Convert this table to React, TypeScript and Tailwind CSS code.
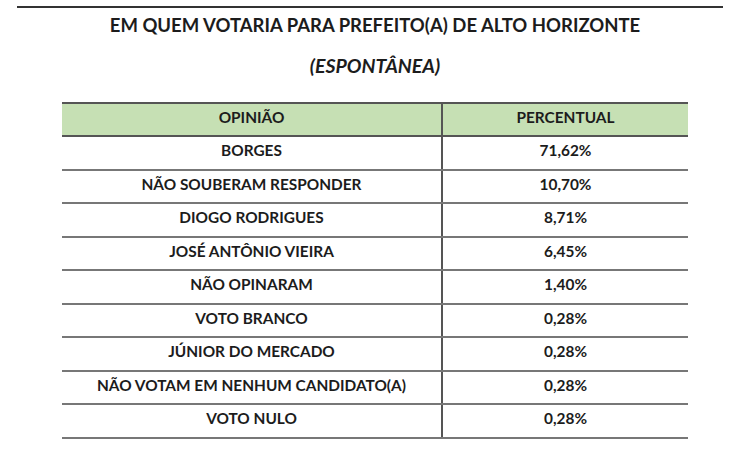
const rows: [string, string][] = [
  ["BORGES", "71,62%"],
  ["NÃO SOUBERAM RESPONDER", "10,70%"],
  ["DIOGO RODRIGUES", "8,71%"],
  ["JOSÉ ANTÔNIO VIEIRA", "6,45%"],
  ["NÃO OPINARAM", "1,40%"],
  ["VOTO BRANCO", "0,28%"],
  ["JÚNIOR DO MERCADO", "0,28%"],
  ["NÃO VOTAM EM NENHUM CANDIDATO(A)", "0,28%"],
  ["VOTO NULO", "0,28%"],
];

export default function App() {
  return (
    <div
      className="w-[750px] h-[450px] bg-white text-[#1c1c1c] overflow-hidden"
      style={{ fontFamily: "Lato, 'Open Sans', sans-serif" }}
    >
      {/* Top rule */}
      <div className="pt-[6px] pl-[17px]">
        <div className="w-[706px] h-[2px] bg-[#333]" />
      </div>

      {/* Heading */}
      <h1 className="mt-[6px] text-center font-bold text-[18.5px] leading-[22px]">
        EM QUEM VOTARIA PARA PREFEITO(A) DE ALTO HORIZONTE
      </h1>
      <h2 className="mt-[19px] text-center font-bold italic text-[19.5px] leading-[22px]">
        (ESPONTÂNEA)
      </h2>

      {/* Table */}
      <div className="mt-[25px] mx-auto w-[626px] border-t-2 border-[#555]">
        <div className="grid grid-cols-[381px_1fr] h-[33px] bg-[#c6e0b4] border-b-2 border-[#555] font-bold text-[15.4px]">
          <div className="flex items-center justify-center pb-[3px] border-r-2 border-[#555]">OPINIÃO</div>
          <div className="flex items-center justify-center pb-[3px]">PERCENTUAL</div>
        </div>
        {rows.map(([name, pct]) => (
          <div
            key={name}
            className="grid grid-cols-[381px_1fr] h-[33.5px] border-b-2 border-[#777] font-bold text-[15.4px]"
          >
            <div className="flex items-center justify-center pb-[4px] border-r-2 border-[#555]">{name}</div>
            <div className="flex items-center justify-center pb-[4px]">{pct}</div>
          </div>
        ))}
      </div>
    </div>
  );
}
